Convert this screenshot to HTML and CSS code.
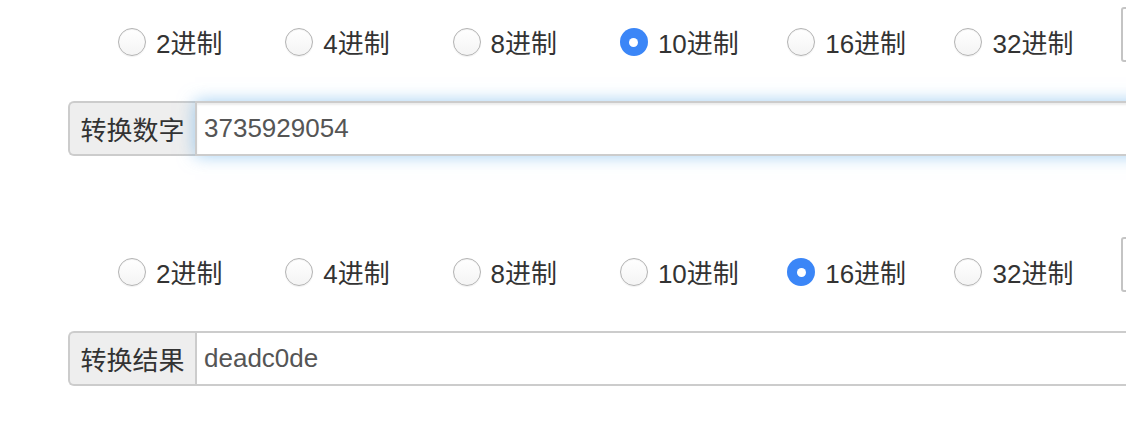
FILE: index.html
```html
<!DOCTYPE html>
<html lang="zh-CN">
<head>
<meta charset="utf-8">
<title>进制转换</title>
<link rel="stylesheet" href="styles.css">
</head>
<body>
<div class="page">
  <section class="block">
    <div class="radio-row">
      <label class="opt"><span class="radio"></span><span class="txt">2进制</span></label>
      <label class="opt"><span class="radio"></span><span class="txt">4进制</span></label>
      <label class="opt"><span class="radio"></span><span class="txt">8进制</span></label>
      <label class="opt"><span class="radio checked"></span><span class="txt">10进制</span></label>
      <label class="opt"><span class="radio"></span><span class="txt">16进制</span></label>
      <label class="opt"><span class="radio"></span><span class="txt">32进制</span></label>
      <div class="custom"></div>
    </div>
    <div class="input-group">
      <span class="addon">转换数字</span>
      <div class="field focus">3735929054</div>
    </div>
  </section>
  <section class="block">
    <div class="radio-row">
      <label class="opt"><span class="radio"></span><span class="txt">2进制</span></label>
      <label class="opt"><span class="radio"></span><span class="txt">4进制</span></label>
      <label class="opt"><span class="radio"></span><span class="txt">8进制</span></label>
      <label class="opt"><span class="radio"></span><span class="txt">10进制</span></label>
      <label class="opt"><span class="radio checked"></span><span class="txt">16进制</span></label>
      <label class="opt"><span class="radio"></span><span class="txt">32进制</span></label>
      <div class="custom"></div>
    </div>
    <div class="input-group">
      <span class="addon">转换结果</span>
      <div class="field">deadc0de</div>
    </div>
  </section>
</div>
</body>
</html>
```
FILE: styles.css
```css
html, body {
  margin: 0;
  padding: 0;
  background: #fff;
  overflow: hidden;
}
body {
  font-family: "Liberation Sans", "Noto Sans CJK SC", sans-serif;
  color: #333;
  width: 1126px;
  height: 438px;
}
.page {
  width: 1126px;
  overflow: hidden;
  height: 438px;
}
.block {
  height: 230px;
}
.radio-row {
  display: grid;
  grid-template-columns: repeat(6, 167.3px) 40px;
  padding-left: 118px;
  height: 101px;
  align-items: start;
}
.opt {
  display: flex;
  align-items: center;
  margin-top: 28px;
  height: 28px;
  font-size: 26px;
  color: #333;
}
.txt {
  position: relative;
  top: -1px;
}
.radio {
  box-sizing: border-box;
  width: 28px;
  height: 28px;
  border-radius: 50%;
  border: 1px solid #b3b3b3;
  background: linear-gradient(#ffffff, #f4f4f4);
  box-shadow: inset 0 1px 1px rgba(0,0,0,0.05), 0 1px 1px rgba(0,0,0,0.06);
  margin-right: 10px;
  flex: none;
  position: relative;
}
.radio.checked {
  border: none;
  background: #3b86f7;
  box-shadow: none;
}
.radio.checked::after {
  content: "";
  position: absolute;
  left: 9.5px;
  top: 9.5px;
  width: 9px;
  height: 9px;
  border-radius: 50%;
  background: #fff;
}
.custom {
  box-sizing: border-box;
  margin-top: 7px;
  height: 55px;
  width: 40px;
  border: 2px solid #c4c4c4;
  border-radius: 3px;
  margin-left: -1px;
}
.input-group {
  display: flex;
  margin-left: 68px;
  width: 1120px;
  height: 55px;
}
.addon {
  box-sizing: border-box;
  width: 127px;
  flex: none;
  display: flex;
  align-items: center;
  justify-content: center;
  background: #eee;
  border: 2px solid #ccc;
  border-right: none;
  border-radius: 6px 0 0 6px;
  font-size: 26px;
  color: #333;
}
.field {
  box-sizing: border-box;
  flex: 1;
  display: flex;
  align-items: center;
  padding-left: 7px;
  border: 2px solid #ccc;
  background: #fff;
  font-size: 26px;
  color: #555;
}
.field.focus {
  box-shadow: inset 0 2px 2px rgba(0,0,0,0.075), 0 0 16px rgba(102,175,233,0.6);
}
```
